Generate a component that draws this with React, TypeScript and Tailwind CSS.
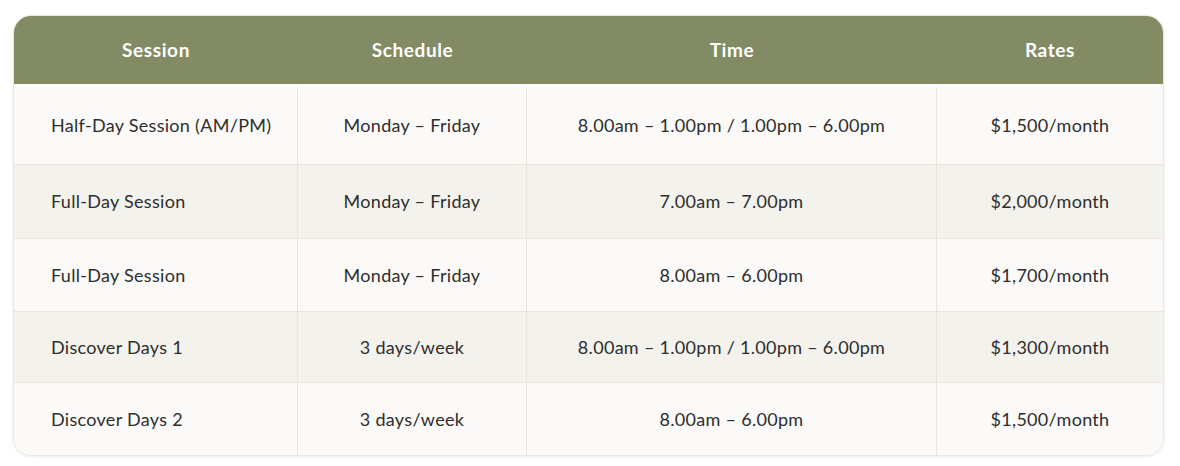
const rows = [
  { session: "Half-Day Session (AM/PM)", schedule: "Monday – Friday", time: "8.00am – 1.00pm / 1.00pm – 6.00pm", rate: "$1,500/month" },
  { session: "Full-Day Session", schedule: "Monday – Friday", time: "7.00am – 7.00pm", rate: "$2,000/month" },
  { session: "Full-Day Session", schedule: "Monday – Friday", time: "8.00am – 6.00pm", rate: "$1,700/month" },
  { session: "Discover Days 1", schedule: "3 days/week", time: "8.00am – 1.00pm / 1.00pm – 6.00pm", rate: "$1,300/month" },
  { session: "Discover Days 2", schedule: "3 days/week", time: "8.00am – 6.00pm", rate: "$1,500/month" },
];

const heights = ["h-[80px] pt-[3px]", "h-[74px]", "h-[73px]", "h-[71px]", "h-[73px]"];

export default function App() {
  return (
    <div className="w-[1180px] h-[466px] bg-white pt-[15px] pl-[13px] font-['Lato','Noto_Sans',sans-serif]">
      <div className="w-[1151px] rounded-[18px] overflow-hidden border border-[#ece7dd] shadow-[0_1px_3px_rgba(120,110,90,0.12)]">
        <div className="grid grid-cols-[284px_229px_410px_1fr] h-[68px] bg-[#838b65] text-white font-bold text-[19px] tracking-[0.6px]">
          {["Session", "Schedule", "Time", "Rates"].map((h) => (
            <div key={h} className="flex items-center justify-center">{h}</div>
          ))}
        </div>
        {rows.map((r, i) => (
          <div
            key={i}
            className={`grid grid-cols-[284px_229px_410px_1fr] text-[18px] tracking-[0.3px] text-[#2e2e2e] ${heights[i]} ${i % 2 === 1 ? "bg-[#f4f2ed]" : "bg-[#fbfaf8]"} ${i > 0 ? "border-t border-[#ebe5d9]" : ""}`}
          >
            <div className="flex items-center pl-[37px] border-r border-[#ebe5d9]">{r.session}</div>
            <div className="flex items-center justify-center border-r border-[#ebe5d9]">{r.schedule}</div>
            <div className="flex items-center justify-center border-r border-[#ebe5d9]">{r.time}</div>
            <div className="flex items-center justify-center">{r.rate}</div>
          </div>
        ))}
      </div>
    </div>
  );
}
